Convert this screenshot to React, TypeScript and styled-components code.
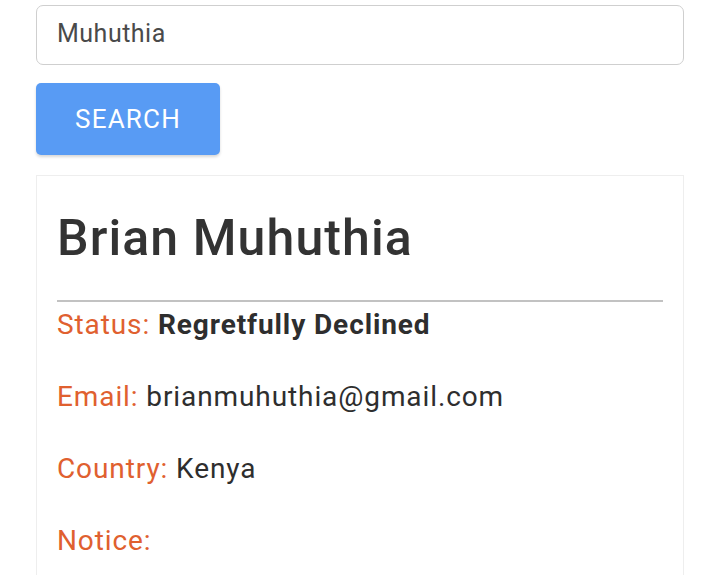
import React from "react";
import styled, { createGlobalStyle } from "styled-components";

const Global = createGlobalStyle`
  html, body { margin: 0; padding: 0; background: #fff; }
  body { font-family: Roboto, "Liberation Sans", Arial, sans-serif; }
`;

const Page = styled.div`
  padding: 5px 36px 0 36px;
  width: 648px;
`;

const SearchInput = styled.input`
  box-sizing: border-box;
  display: block;
  width: 100%;
  height: 60px;
  padding: 0 20px 4px;
  border: 1px solid #cfcfcf;
  border-radius: 7px;
  font-family: Roboto, "Liberation Sans", Arial, sans-serif;
  font-size: 25px;
  letter-spacing: 0.5px;
  color: #4a4a4a;
  outline: none;
  background: #fff;
`;

const SearchButton = styled.button`
  display: block;
  margin-top: 18px;
  width: 184px;
  height: 72px;
  border: none;
  border-radius: 5px;
  background: #589bf4;
  color: #fff;
  font-family: Roboto, "Liberation Sans", Arial, sans-serif;
  font-size: 26px;
  letter-spacing: 1.2px;
  line-height: 72px;
  text-align: center;
  padding: 0;
  box-shadow: 0 2px 3px rgba(0, 0, 0, 0.16);
`;

const Card = styled.section`
  margin-top: 20px;
  border: 1px solid #eeeeee;
  border-bottom: none;
  padding: 31px 20px 40px;
`;

const Name = styled.h1`
  margin: 0;
  font-size: 50px;
  letter-spacing: 1.1px;
  line-height: 62px;
  font-weight: 500;
  color: #333;
`;

const Divider = styled.hr`
  margin: 31px 0 0;
  border: none;
  height: 2px;
  background: #c2c2c2;
`;

const Fields = styled.div`
  margin-top: 5px;
  display: flex;
  flex-direction: column;
  gap: 36px;
`;

const Field = styled.p`
  margin: 0;
  font-size: 28px;
  letter-spacing: 0.9px;
  line-height: 36px;
  color: #2e2e2e;
`;

const Label = styled.span`
  color: #e0602f;
`;

const Value = styled.span<{ $bold?: boolean }>`
  font-weight: ${(p) => (p.$bold ? 700 : 400)};
`;

export default function App() {
  return (
    <>
      <Global />
      <Page>
        <SearchInput defaultValue="Muhuthia" />
        <SearchButton>SEARCH</SearchButton>
        <Card>
          <Name>Brian Muhuthia</Name>
          <Divider />
          <Fields>
            <Field>
              <Label>Status: </Label>
              <Value $bold>Regretfully Declined</Value>
            </Field>
            <Field>
              <Label>Email: </Label>
              <Value>brianmuhuthia@gmail.com</Value>
            </Field>
            <Field>
              <Label>Country: </Label>
              <Value>Kenya</Value>
            </Field>
            <Field>
              <Label>Notice: </Label>
            </Field>
          </Fields>
        </Card>
      </Page>
    </>
  );
}
